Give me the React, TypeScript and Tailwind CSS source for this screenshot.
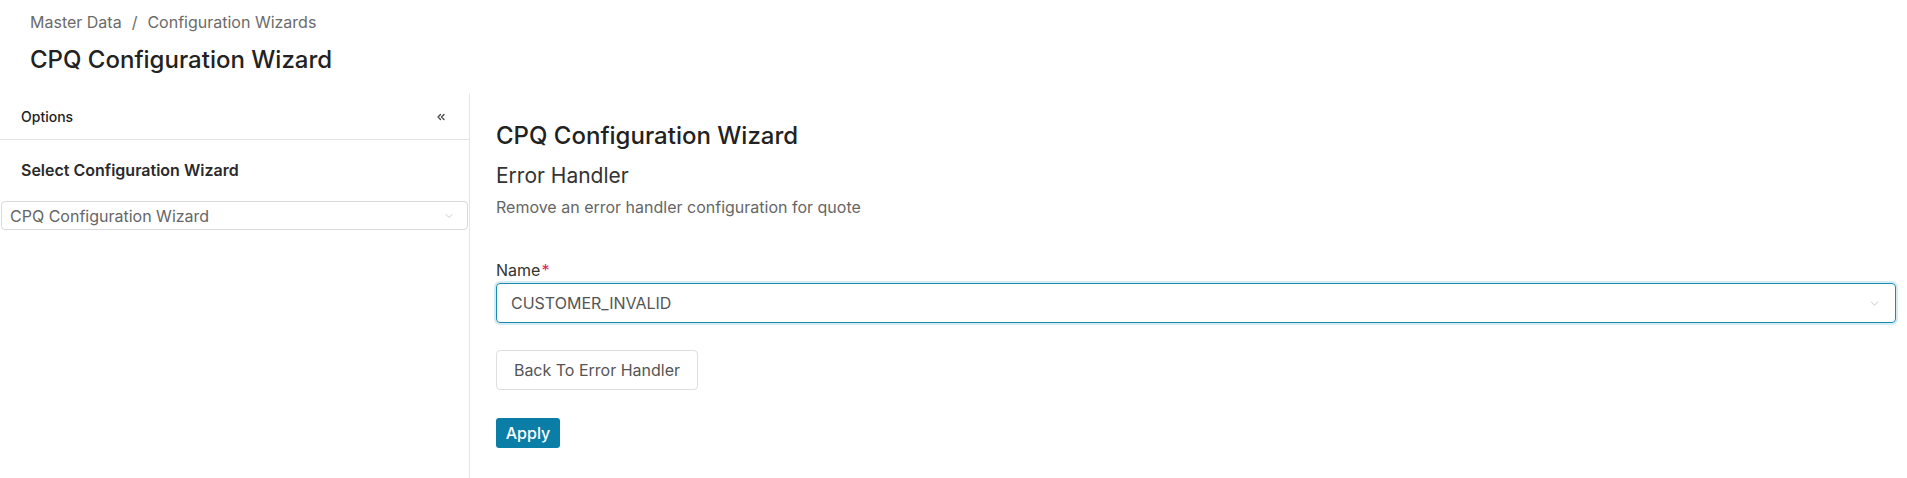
import { ChevronDown, ChevronsLeft } from "lucide-react";

export default function App() {
  return (
    <div className="min-h-[478px] bg-white font-['Inter',sans-serif] text-[#222]">
      {/* page header */}
      <div className="px-[30px] pt-3">
        <div className="flex items-center gap-[10px] text-[16px] leading-5 text-[#6b6b6b]">
          <span>Master Data</span>
          <span>/</span>
          <span>Configuration Wizards</span>
        </div>
        <h1 className="mt-[14px] text-[24px] font-medium leading-7 text-[#222]">
          CPQ Configuration Wizard
        </h1>
      </div>

      <div className="mt-5 flex min-h-[384px]">
        {/* options sidebar */}
        <aside className="w-[470px] shrink-0 border-r border-[#e5e5e5]">
          <div className="flex h-[46px] items-center justify-between border-b border-[#e3e3e3] pl-[21px] pr-[22px]">
            <span className="text-[14px] font-medium text-[#222]">Options</span>
            <ChevronsLeft className="h-[12px] w-[12px] text-[#444]" strokeWidth={2.5} />
          </div>
          <div className="pl-[21px] pt-5 text-[16px] font-semibold leading-5 text-[#2a2a2a]">
            Select Configuration Wizard
          </div>
          <div className="mx-px mt-[21px] flex h-[29px] items-center justify-between rounded-[4px] border border-[#d9d9d9] pl-[8px] pr-[12px]">
            <span className="text-[16px] text-[#666]">CPQ Configuration Wizard</span>
            <ChevronDown className="h-[12px] w-[12px] text-[#bbb]" strokeWidth={1.5} />
          </div>
        </aside>

        {/* main panel */}
        <main className="flex-1 pl-[26px] pr-[11px] pt-[28px]">
          <h2 className="text-[24px] font-medium leading-7 text-[#222]">
            CPQ Configuration Wizard
          </h2>
          <h3 className="mt-[14px] text-[21px] leading-6 text-[#333]">Error Handler</h3>
          <p className="mt-[9px] text-[16px] leading-5 text-[#666]">
            Remove an error handler configuration for quote
          </p>

          <label className="mt-[43px] block text-[16px] leading-5 text-[#333]">
            Name<span className="ml-px text-[#e0245e]">*</span>
          </label>
          <div className="mt-[3px] flex h-[40px] items-center justify-between rounded-[4px] border border-[#1a8ab3] pl-[14px] pr-[14px] shadow-[0_0_0_2px_#d6ebf3]">
            <span className="text-[16px] text-[#555]">CUSTOMER_INVALID</span>
            <ChevronDown className="h-[13px] w-[13px] text-[#bbb]" strokeWidth={1.5} />
          </div>

          <button className="mt-[27px] flex h-[40px] w-[202px] items-center justify-center rounded-[4px] border border-[#dedede] bg-white text-[16px] text-[#555]">
            Back To Error Handler
          </button>

          <button className="mt-[28px] flex h-[30px] w-[64px] items-center justify-center rounded-[3px] bg-[#0b7ea8] text-[16px] font-medium text-white">
            Apply
          </button>
        </main>
      </div>
    </div>
  );
}
